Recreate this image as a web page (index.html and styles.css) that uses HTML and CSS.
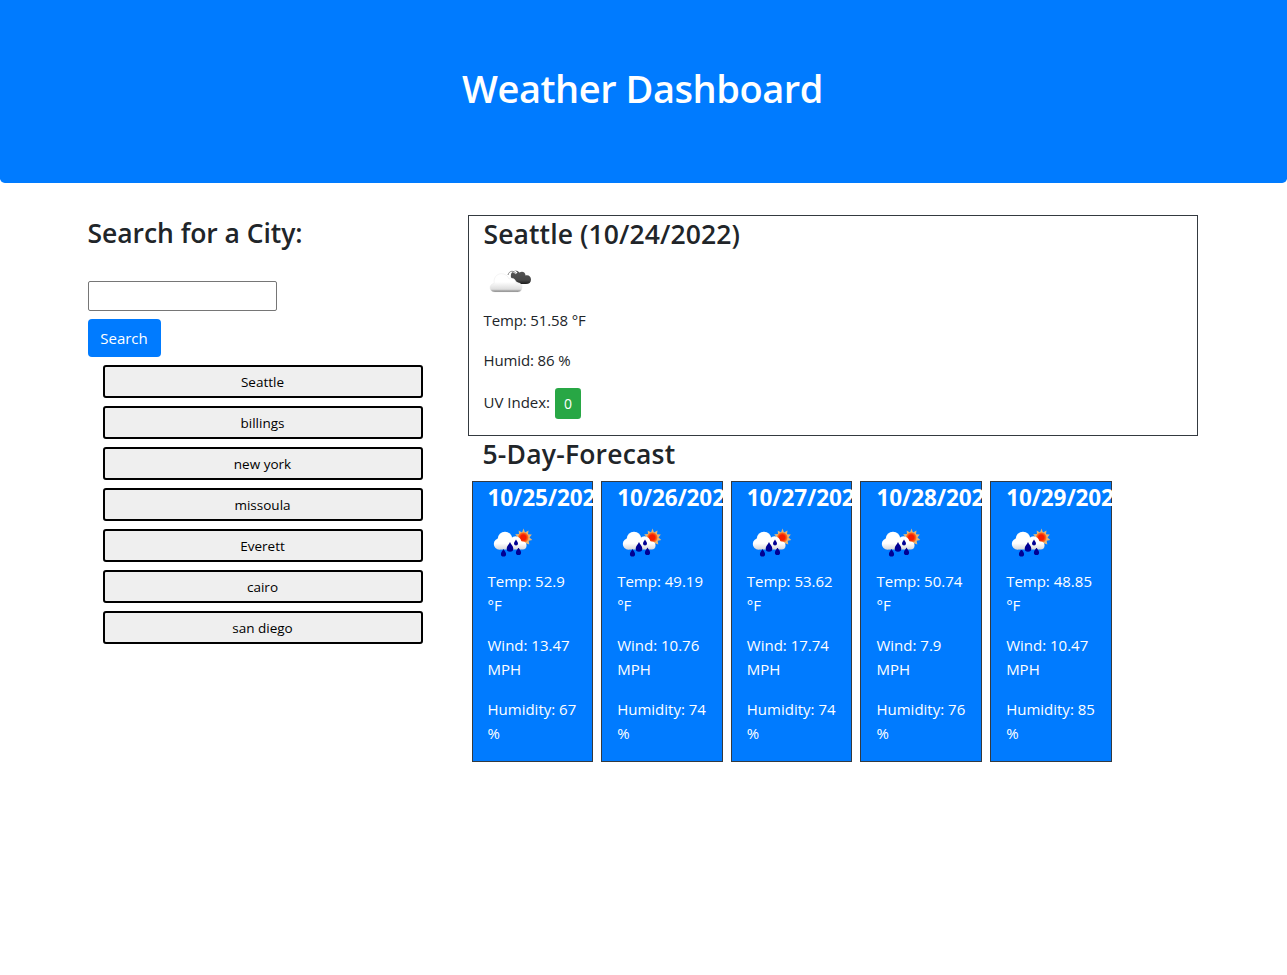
FILE: index.html
```html
<!DOCTYPE html>
<html lang="en">
<head>
<meta charset="utf-8">
<title>Weather Dashboard</title>
<link rel="stylesheet" href="styles.css">
</head>
<body>
<svg class="sprites" aria-hidden="true">
  <defs>
    <linearGradient id="cloud" x1="0" y1="0" x2="0" y2="1">
      <stop offset=".45" stop-color="#fff"/><stop offset=".85" stop-color="#ddd"/><stop offset="1" stop-color="#777"/>
    </linearGradient>
    <linearGradient id="dark" x1="0" y1="0" x2="0" y2="1">
      <stop offset="0" stop-color="#555"/><stop offset=".7" stop-color="#484848"/><stop offset="1" stop-color="#1c1c1c"/>
    </linearGradient>
    <radialGradient id="sun"><stop offset=".5" stop-color="#f51c00"/><stop offset="1" stop-color="#ff8a2a"/></radialGradient>
    <linearGradient id="rainCloud" gradientUnits="userSpaceOnUse" x1="0" y1="13" x2="0" y2="32">
      <stop offset=".65" stop-color="#fff"/><stop offset="1" stop-color="#d4d4d8"/>
    </linearGradient>
    <symbol id="rain" viewBox="0 0 50 50">
      <path d="M35.500 10.500l1.500 4 3.500-2-.5 3.800 3.800.2-2.300 3 2.800 2.500-3.600.8.600 3.800-3.600-1.300-2.200 3.200-1.800-3.200-3.700 1.300.5-3.800-3.800-.8 2.800-2.700-2.300-3 3.800-.3-.3-3.600 3.300 2z" fill="#e3b478"/>
      <circle cx="35.300" cy="19.500" r="5.300" fill="url(#sun)"/>
      <g fill="url(#rainCloud)">
        <circle cx="11.500" cy="26" r="5.700"/><circle cx="17" cy="21" r="7.300"/><circle cx="27.500" cy="24" r="5.800"/><circle cx="34.500" cy="27.500" r="4"/>
        <rect x="11" y="23" width="24" height="8.500" rx="3"/>
      </g>
      <g fill="#000094">
        <path d="M22 24c-1 2.500-3.300 4-3.300 6.500a3.300 3.300 0 0 0 6.600 0c0-2.500-2.300-4-3.300-6.500z"/>
        <path d="M28 21.500c-.6 1.500-2 2.500-2 4a2 2 0 0 0 4 0c0-1.500-1.400-2.500-2-4z"/>
        <path d="M15.500 31c-.8 2-2.600 3-2.600 5a2.600 2.600 0 0 0 5.200 0c0-2-1.800-3-2.600-5z"/>
        <path d="M30.500 29.500c-.8 2-2.600 3-2.600 5a2.600 2.600 0 0 0 5.200 0c0-2-1.800-3-2.600-5z"/>
      </g>
    </symbol>
  </defs>
</svg>
<header class="jumbotron"><h1>Weather Dashboard</h1></header>
<main class="container">
  <section class="search">
    <h3>Search for a City:</h3>
    <input class="city-input" type="text" aria-label="City">
    <button class="btn-search">Search</button>
    <div class="history">
      <button>Seattle</button>
      <button>billings</button>
      <button>new york</button>
      <button>missoula</button>
      <button>Everett</button>
      <button>cairo</button>
      <button>san diego</button>
    </div>
  </section>
  <section class="weather">
    <div class="current">
      <h3>Seattle (10/24/2022)</h3>
      <svg class="icon" viewBox="0 0 50 50">
        <path d="M27 19.500c-1-7 5-9 8.500-5 3-2 6 0 6 3 3-1 5.500 1 5.500 4s-2 4.500-5 4.500H36l-6-4z" fill="url(#dark)"/>
        <path d="M24 17.500c1-5 6-6 8.500-2" fill="none" stroke="#fff" stroke-width="2.400"/>
        <path d="M24 17c1-4.500 6-5 8.500-1" fill="none" stroke="#777" stroke-width=".9"/>
        <path d="M11 34c-6.500 0-6.500-8-.8-8.600C9 18.500 14.500 14.500 19.500 16c3 .8 4.800 3 5.500 5 4-2 7 .5 7 4 4-1 6.500 1.500 6 4.700-.2 3-2 4.300-4.500 4.300z" fill="url(#cloud)" stroke="#e4e4e4" stroke-width=".4"/>
      </svg>
      <p>Temp: 51.58 °F</p>
      <p>Humid: 86 %</p>
      <p class="uv">UV Index: <span class="badge">0</span></p>
    </div>
    <h3 class="forecast-title">5-Day-Forecast</h3>
    <div class="forecast">
      <article class="day"><h4>10/25/2022</h4><svg class="icon"><use href="#rain"/></svg><p>Temp: 52.9<br>°F</p><p>Wind: 13.47<br>MPH</p><p>Humidity: 67<br>%</p></article>
      <article class="day"><h4>10/26/2022</h4><svg class="icon"><use href="#rain"/></svg><p>Temp: 49.19<br>°F</p><p>Wind: 10.76<br>MPH</p><p>Humidity: 74<br>%</p></article>
      <article class="day"><h4>10/27/2022</h4><svg class="icon"><use href="#rain"/></svg><p>Temp: 53.62<br>°F</p><p>Wind: 17.74<br>MPH</p><p>Humidity: 74<br>%</p></article>
      <article class="day"><h4>10/28/2022</h4><svg class="icon"><use href="#rain"/></svg><p>Temp: 50.74<br>°F</p><p>Wind: 7.9<br>MPH</p><p>Humidity: 76<br>%</p></article>
      <article class="day"><h4>10/29/2022</h4><svg class="icon"><use href="#rain"/></svg><p>Temp: 48.85<br>°F</p><p>Wind: 10.47<br>MPH</p><p>Humidity: 85<br>%</p></article>
    </div>
  </section>
</main>
</body>
</html>
```
FILE: styles.css
```css
* { box-sizing: border-box; }
body {
  margin: 0;
  background: #fff;
  color: #212529;
  font: 400 15px/24px "Open Sans", "Noto Sans", sans-serif;
}
button, input { font-family: inherit; }
.sprites { display: block; width: 0; height: 0; }
h1, h3, h4 { margin: 0 0 8px; font-weight: 600; white-space: nowrap; }
h1 { font-size: 38px; line-height: 48px; letter-spacing: -0.45px; }
h3 { font-size: 26.500px; line-height: 33.600px; }
h4 { font-size: 22.500px; font-weight: 700; line-height: 28.800px; letter-spacing: -0.1px; }
p { margin: 0 0 16px; white-space: nowrap; }
.jumbotron {
  height: 183px;
  margin-bottom: 32px;
  padding: 64px 2px 0 0;
  border-radius: 0 0 4.800px 4.800px;
  background: #007bff;
  color: #fff;
  text-align: center;
}
.container {
  display: grid;
  grid-template-columns: 350px 730px;
  column-gap: 30px;
  width: 1112px;
  margin: 0 auto;
}
.search { display: flex; flex-direction: column; align-items: flex-start; }
.search h3 { margin-bottom: 30px; padding-top: 2px; letter-spacing: -0.05px; }
.city-input {
  width: 189px;
  height: 30px;
  margin-bottom: 8px;
  border: 1px solid #767676;
  border-radius: 2px;
}
.btn-search {
  width: 73px;
  height: 38px;
  margin-bottom: 8px;
  padding: 0;
  border: 0;
  border-radius: 4px;
  background: #007bff;
  color: #fff;
  font-size: 15px;
}
.history { display: grid; gap: 8px; width: 100%; padding: 0 15px; }
.history button {
  height: 33px;
  padding: 1px 0 0;
  border: 2px solid #000;
  border-radius: 3px;
  background: #efefef;
  color: #000;
  font-size: 13.500px;
}
.current {
  height: 221px;
  padding: 0 15px;
  border: 1px solid #343a40;
}
.icon { display: block; width: 50px; height: 50px; }
.current h3 { margin-bottom: 6px; padding-top: 2px; letter-spacing: 0.1px; }
.current p { letter-spacing: -0.12px; }
.current .uv { display: flex; gap: 5px; height: 31px; line-height: 28px; letter-spacing: 0; }
.badge {
  width: 26px;
  height: 31px;
  border-radius: 3.200px;
  background: #28a745;
  color: #fff;
  font-size: 14px;
  line-height: 32px;
  text-align: center;
}
.forecast-title { padding: 2px 0 0 15px; letter-spacing: 0.2px; }
.forecast { display: flex; gap: 8px; padding: 1px 4px 0; }
.day {
  position: relative;
  flex: 0 0 121.660px;
  min-width: 0;
  height: 281px;
  padding: 2px 15px 0;
  border: 1px solid #343a40;
  background: #007bff;
  color: #fff;
}
.day h4 { margin-bottom: 6px; }
.day .icon { margin-bottom: 1px; }
```
